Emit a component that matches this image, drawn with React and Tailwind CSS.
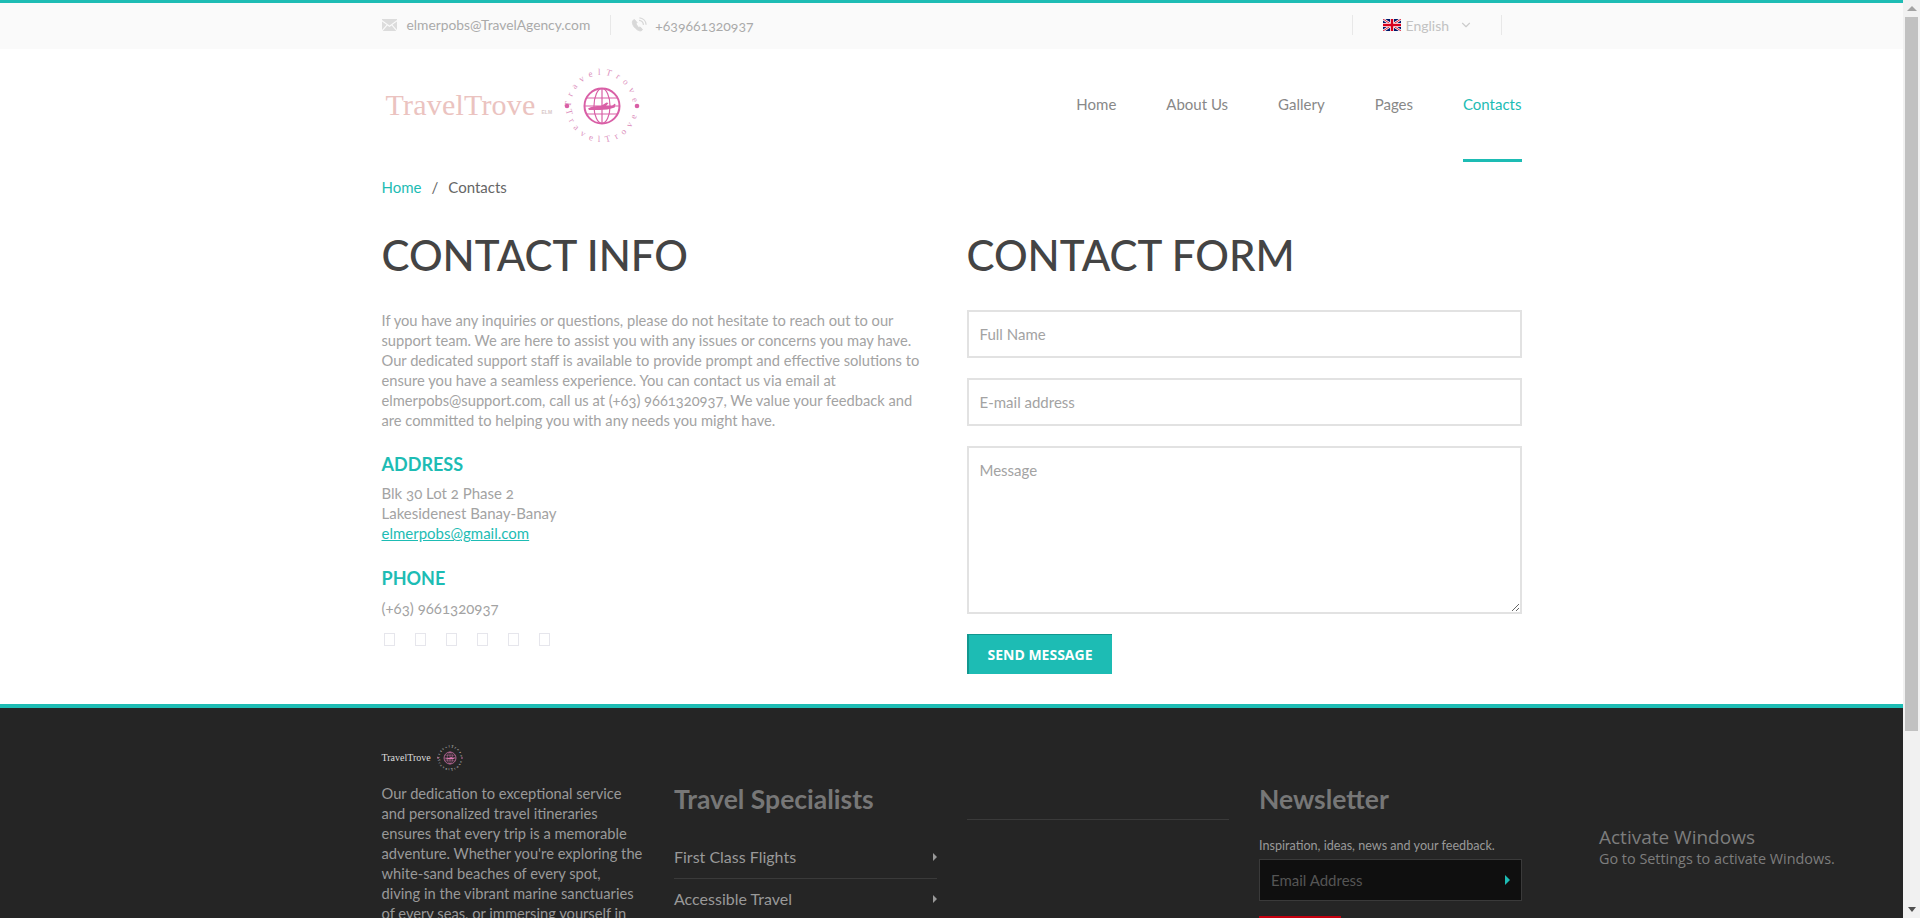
import React from 'react';
import { ChevronDown } from 'lucide-react';

const navItems = ['Home', 'About Us', 'Gallery', 'Pages', 'Contacts'];
const specialists = ['First Class Flights', 'Accessible Travel'];

const infoLines = [
  'If you have any inquiries or questions, please do not hesitate to reach out to our',
  'support team. We are here to assist you with any issues or concerns you may have.',
  'Our dedicated support staff is available to provide prompt and effective solutions to',
  'ensure you have a seamless experience. You can contact us via email at',
  'elmerpobs@support.com, call us at (+63) 9661320937, We value your feedback and',
  'are committed to helping you with any needs you might have.',
];

const aboutLines = [
  'Our dedication to exceptional service',
  'and personalized travel itineraries',
  'ensures that every trip is a memorable',
  "adventure. Whether you're exploring the",
  'white-sand beaches of every spot,',
  'diving in the vibrant marine sanctuaries',
  'of every seas, or immersing yourself in',
];

const MailIcon = () => (
  <svg width="15" height="12" viewBox="0 0 15 12" fill="#dcdcdc">
    <path d="M0 1l7.500 5.500L15 1V0H0z" />
    <path d="M0 2.400V11l4.600-5.200zM15 2.400V11l-4.600-5.200zM5.400 6.400L.7 12h13.600L9.600 6.400 7.500 8z" />
  </svg>
);

const PhoneIcon = () => (
  <svg width="16" height="16" viewBox="0 0 16 16" fill="none" stroke="#d8d8d8">
    <path d="M2.200 3.200c-1.600 1.600-.8 4.800 1.600 7.400 2.400 2.600 5.200 4 6.900 2.900l.8-1-2.400-2.600-1.400.9C7.400 10.200 5.600 8.200 5 6.800l1-1.200-2.500-3z" fill="#d8d8d8" />
    <path d="M8 3.400c2.400.2 4.200 2 4.500 4.400M8.400.9c3.600.2 6.400 3 6.700 6.800" strokeWidth="1.300" />
  </svg>
);

const UkFlag = () => (
  <svg width="18" height="12" viewBox="0 0 60 40">
    <rect width="60" height="40" fill="#00186a" />
    <path d="M0 0l60 40M60 0L0 40" stroke="#fff" strokeWidth="8" />
    <path d="M0 0l60 40M60 0L0 40" stroke="#d8001e" strokeWidth="3" />
    <path d="M30 0v40M0 20h60" stroke="#fff" strokeWidth="13" />
    <path d="M30 0v40M0 20h60" stroke="#d8001e" strokeWidth="8" />
  </svg>
);

// round badge next to the wordmark, text runs along the ring
const GlobeBadge = ({ id, size = 76, color = '#d95fa6', ringText = '#dc8fbd' }) => (
  <svg width={size} height={size} viewBox="0 0 76 76">
    <defs>
      <path id={`${id}Top`} d="M7 38a31 31 0 0 1 62 0" />
      <path id={`${id}Bottom`} d="M2 38a36 36 0 0 0 72 0" />
    </defs>
    <text fill={ringText} fontSize="9" letterSpacing="5" fontFamily="Liberation Serif, serif">
      <textPath href={`#${id}Top`} startOffset="50%" textAnchor="middle">TravelTrove</textPath>
    </text>
    <text fill={ringText} fontSize="9" letterSpacing="5.500" fontFamily="Liberation Serif, serif">
      <textPath href={`#${id}Bottom`} startOffset="50%" textAnchor="middle">TravelTrove</textPath>
    </text>
    <circle cx="3" cy="38" r="2.300" fill={color} />
    <circle cx="73" cy="38" r="2.300" fill={color} />
    <g fill="none" stroke={color}>
      <circle cx="38" cy="38" r="17.500" strokeWidth="2" />
      <ellipse cx="38" cy="38" rx="8" ry="17.500" strokeWidth="1.200" />
      <path d="M38 20.500v35M22 30h32M22 46h32M20.500 38h35" strokeWidth="1.200" />
    </g>
    <path d="M24 40.500c3-2.300 8-2.500 13-2.500l5.500-3.500 2 .5-2.500 3h6l2.500-2.300 1 .3-.8 3.500c-4 1.700-11 2.500-15 2.500h-10.700z" fill={color} />
  </svg>
);

const TopBar = () => (
  <div className="border-t-[3px] border-[#1dbcb4] bg-[#fafafa] h-[49px]">
    <div className="w-[1140px] mx-auto h-[46px] pb-[2px] flex items-center justify-between text-[#aaaaaa]">
      <div className="flex items-center">
        <MailIcon />
        <span className="ml-[10px] text-[13.8px]">elmerpobs@TravelAgency.com</span>
        <span className="w-px h-5 bg-[#e8e8e8] ml-[20px] mr-[20px]" />
        <PhoneIcon />
        <span className="ml-[8px] text-[14px]">+639661320937</span>
      </div>
      <div className="flex items-center mr-[20px]">
        <span className="w-px h-5 bg-[#e8e8e8]" />
        <div className="w-[148px] flex items-center pl-[30px] text-[14px] text-[#c2c2c2]">
          <UkFlag />
          <span className="ml-[5px]">English</span>
          <ChevronDown size={14} className="ml-[10px] text-[#cccccc]" />
        </div>
        <span className="w-px h-5 bg-[#e8e8e8]" />
      </div>
    </div>
  </div>
);

const Header = () => (
  <div className="w-[1140px] mx-auto h-[113px] flex justify-between">
    <div className="flex items-center pl-[4px]">
      <span className="font-['Liberation_Serif',serif] text-[30px] tracking-[0.2px] text-[#ebc3c0] -mt-[2px]">TravelTrove</span>
      <span className="font-['Liberation_Sans',sans-serif] text-[5px] font-bold text-[#d8c8c8] ml-[6px] mt-[14px] mr-[12px]">ELM</span>
      <GlobeBadge id="main" />
    </div>
    <nav className="flex gap-[50px] text-[15px] text-[#888888]">
      {navItems.map((item) => (
        <a
          key={item}
          href="#"
          className={`pt-[44px] border-b-[3px] ${item === 'Contacts' ? 'text-[#1dbcb4] border-[#1dbcb4]' : 'border-transparent'}`}
        >
          {item}
        </a>
      ))}
    </nav>
  </div>
);

const ContactInfo = () => (
  <div className="w-[585px] pr-[30px]">
    <h1 className="text-[42px] leading-[50px] font-medium text-[#444444]">CONTACT INFO</h1>
    <div className="mt-[30px] text-[14.7px] leading-[20px] text-[#a3a3a3]">
      {infoLines.map((line) => (
        <p key={line} className="whitespace-nowrap">{line}</p>
      ))}
    </div>
    <h4 className="mt-[24px] text-[18px] leading-[20px] font-bold text-[#1dbcb4]">ADDRESS</h4>
    <div className="mt-[9px] text-[15px] leading-[20px] text-[#a3a3a3]">
      <p>Blk 30 Lot 2 Phase 2</p>
      <p>Lakesidenest Banay-Banay</p>
      <a href="#" className="text-[#1dbcb4] underline">elmerpobs@gmail.com</a>
    </div>
    <h4 className="mt-[25px] text-[18px] leading-[20px] font-bold text-[#1dbcb4]">PHONE</h4>
    <p className="mt-[10px] text-[15px] leading-[20px] text-[#a3a3a3]">(+63) 9661320937</p>
    <div className="mt-[15px] flex gap-[20px] pl-[2px]">
      {[0, 1, 2, 3, 4, 5].map((i) => (
        <span key={i} className="w-[11px] h-[13px] border border-[#e6e6ec]" />
      ))}
    </div>
  </div>
);

const ContactForm = () => (
  <form className="w-[555px]">
    <h1 className="text-[42px] leading-[50px] font-medium text-[#444444]">CONTACT FORM</h1>
    <input
      placeholder="Full Name"
      className="mt-[30px] block w-full h-[48px] px-[11px] border-2 border-[#e2e2e2] text-[15px] placeholder:text-[#a3a3a3] outline-none"
    />
    <input
      placeholder="E-mail address"
      className="mt-[20px] block w-full h-[48px] px-[11px] border-2 border-[#e2e2e2] text-[15px] placeholder:text-[#a3a3a3] outline-none"
    />
    <textarea
      placeholder="Message"
      className="mt-[20px] block w-full h-[168px] px-[11px] py-[11px] border-2 border-[#e2e2e2] text-[15px] placeholder:text-[#a3a3a3] outline-none"
    />
    <button
      type="button"
      className="mt-[20px] w-[145px] h-[40px] bg-[#1dbcb4] border-t border-l-2 border-[#12978f] text-white text-[14px] font-bold font-['Open_Sans',sans-serif]"
    >
      SEND MESSAGE
    </button>
  </form>
);

const Footer = () => (
  <div className="border-t-4 border-[#1dbcb4] bg-[#252525] flex-1 overflow-hidden">
    <div className="w-[1140px] mx-auto grid grid-cols-4 gap-[30px]">
      <div className="pt-[37px]">
        <div className="flex items-center">
          <span className="font-['Liberation_Serif',serif] text-[10px] leading-[26px] text-[#dddddd]">TravelTrove</span>
          <span className="ml-[6px] flex">
            <GlobeBadge id="foot" size={26} color="#e07ab5" ringText="#ffffff" />
          </span>
        </div>
        <div className="mt-[12px] text-[14.7px] leading-[20px] text-[#999999]">
          {aboutLines.map((line) => (
            <p key={line} className="whitespace-nowrap">{line}</p>
          ))}
        </div>
      </div>
      <div className="pt-[76px]">
        <h3 className="text-[26.5px] leading-[30px] font-bold text-[#777777]">Travel Specialists</h3>
        <ul className="mt-[23px] text-[16px] text-[#999999]">
          {specialists.map((item) => (
            <li key={item} className="h-[42px] pb-[2px] flex items-center justify-between border-b border-[#3a3a3a]">
              {item}
              <span className="w-0 h-0 border-y-[4px] border-y-transparent border-l-[4px] border-l-[#999999]" />
            </li>
          ))}
        </ul>
      </div>
      <div className="pt-[111px]">
        <div className="border-t border-[#3a3a3a]" />
      </div>
      <div className="pt-[76px]">
        <h3 className="text-[26.5px] leading-[30px] font-bold text-[#777777]">Newsletter</h3>
        <p className="mt-[23px] text-[12.6px] leading-[18px] text-[#999999]">Inspiration, ideas, news and your feedback.</p>
        <div className="mt-[4px] h-[42px] flex items-center justify-between px-[11px] bg-[#0f0f0f] border border-[#3a3a3a]">
          <span className="text-[15px] text-[#555555]">Email Address</span>
          <span className="w-0 h-0 border-y-[5px] border-y-transparent border-l-[5px] border-l-[#1dbcb4]" />
        </div>
        <div className="mt-[15px] w-[82px] h-[40px] bg-[#c5000f]" />
      </div>
    </div>
  </div>
);

const Scrollbar = () => (
  <div className="w-[17px] h-full bg-[#f1f1f1] flex flex-col items-center shrink-0">
    <span className="h-[17px] flex items-center">
      <span className="w-0 h-0 border-x-[5px] border-x-transparent border-b-[5px] border-b-[#a3a3a3]" />
    </span>
    <span className="w-[13px] h-[714px] bg-[#c1c1c1]" />
    <span className="flex-1" />
    <span className="h-[17px] flex items-center">
      <span className="w-0 h-0 border-x-[4px] border-x-transparent border-t-[5px] border-t-[#505050]" />
    </span>
  </div>
);

const App = () => (
  <div className="font-['Lato','Open_Sans',sans-serif] oldstyle-nums relative h-[918px] flex overflow-hidden bg-white">
    <div className="flex-1 min-w-0 flex flex-col">
      <TopBar />
      <Header />
      <div className="w-[1140px] mx-auto pt-[15px] text-[15px] leading-[20px]">
        <a href="#" className="text-[#1dbcb4]">Home</a>
        <span className="mx-[10px] text-[#666666]">/</span>
        <span className="text-[#666666]">Contacts</span>
      </div>
      <div className="w-[1140px] mx-auto pt-[33px] h-[507px] flex">
        <ContactInfo />
        <ContactForm />
      </div>
      <Footer />
    </div>
    <Scrollbar />
    {/* windows watermark sits over the page */}
    <div className="absolute left-[1599px] top-[825px] font-['Open_Sans',sans-serif] text-[#7d7d7d]">
      <p className="text-[19px] leading-[24px]">Activate Windows</p>
      <p className="text-[14.4px] leading-[20px]">Go to Settings to activate Windows.</p>
    </div>
  </div>
);

export default App;
